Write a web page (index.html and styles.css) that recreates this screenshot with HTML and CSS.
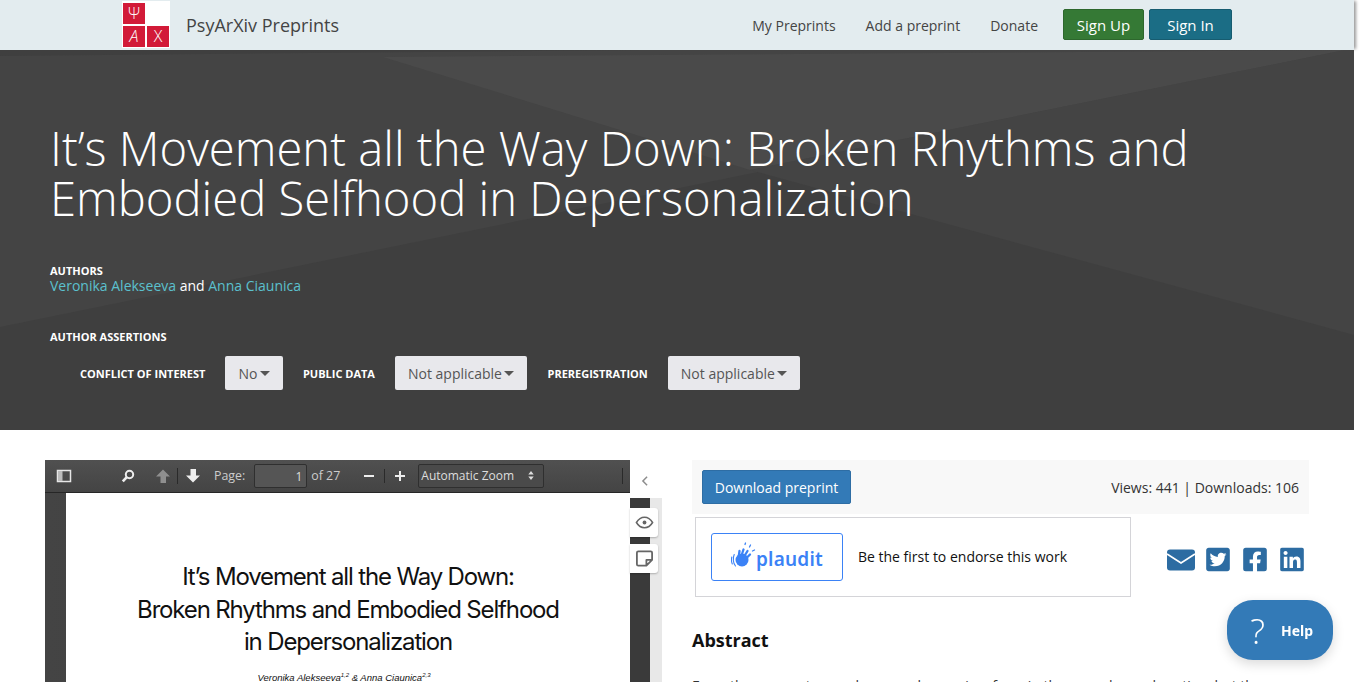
FILE: index.html
```html
<!DOCTYPE html>
<html lang="en">
<head>
<meta charset="utf-8">
<title>PsyArXiv Preprints</title>
<link rel="stylesheet" href="styles.css">
</head>
<body>
<div class="page">
  <header class="nav">
    <a class="logo" href="#">
      <span class="cell">Ψ</span><span class="cell blank"></span>
      <span class="cell ital">A</span><span class="cell">Χ</span>
    </a>
    <a class="brand" href="#">PsyArXiv Preprints</a>
    <nav class="links">
      <a href="#">My Preprints</a>
      <a href="#">Add a preprint</a>
      <a href="#">Donate</a>
    </nav>
    <div class="auth">
      <a class="btn up" href="#">Sign Up</a>
      <a class="btn in" href="#">Sign In</a>
    </div>
  </header>

  <section class="hero">
    <svg class="hero-bg" viewBox="0 0 1354 380" preserveAspectRatio="none" aria-hidden="true">
      <polygon points="0,0 1354,0 0,277" fill="#444444"/>
      <polygon points="383,7 1345,0 750,120" fill="#4a4a4a"/>
      <polygon points="1345,0 1354,0 1354,285 750,120" fill="#444444"/>
      <polygon points="0,0 640,0 0,6" fill="#3f3f3f"/>
    </svg>
    <div class="hero-inner">
      <h1>It’s Movement all the Way Down: Broken Rhythms and Embodied Selfhood in Depersonalization</h1>
      <div class="authors">
        <h5>AUTHORS</h5>
        <p><a href="#">Veronika Alekseeva</a> and <a href="#">Anna Ciaunica</a></p>
      </div>
      <h5 class="assert-title">AUTHOR ASSERTIONS</h5>
      <div class="assertions">
        <span class="label">CONFLICT OF INTEREST</span>
        <button class="drop">No<i></i></button>
        <span class="label">PUBLIC DATA</span>
        <button class="drop">Not applicable<i></i></button>
        <span class="label">PREREGISTRATION</span>
        <button class="drop">Not applicable<i></i></button>
      </div>
    </div>
  </section>

  <main class="content">
    <div class="viewer-wrap">
      <div class="viewer">
        <div class="toolbar">
          <svg class="tb sidebar" viewBox="0 0 16 16"><rect x="1.5" y="2.500" width="13" height="11" fill="none" stroke="#e6e6e6" stroke-width="1.500"/><rect x="2" y="3" width="4.500" height="10" fill="#bbb"/></svg>
          <svg class="tb search" viewBox="0 0 16 16"><circle cx="9.500" cy="6.500" r="3.700" fill="none" stroke="#eee" stroke-width="2"/><path d="M6.800 9.200 2.800 13.400" stroke="#eee" stroke-width="2.600"/></svg>
          <svg class="tb up-arrow" viewBox="0 0 16 16"><path d="M8 1.500 15 8.500H11V15H5.500V8.500H1Z" fill="#8f8f8f"/></svg>
          <span class="sep"></span>
          <svg class="tb down-arrow" viewBox="0 0 16 16"><path d="M8 14.500 15 7.500H11V1H5.500V7.500H1Z" fill="#eee"/></svg>
          <span class="tb-text page-label">Page:</span>
          <span class="page-input">1</span>
          <span class="tb-text of">of 27</span>
          <svg class="tb minus" viewBox="0 0 12 12"><path d="M1 6H11" stroke="#eee" stroke-width="2"/></svg>
          <span class="sep short"></span>
          <svg class="tb plus" viewBox="0 0 12 12"><path d="M1 6H11M6 1V11" stroke="#eee" stroke-width="2"/></svg>
          <span class="zoom-select">Automatic Zoom<svg viewBox="0 0 6 10"><path d="M3 0 6 4H0ZM3 10 0 6H6Z" fill="#ddd"/></svg></span>
          <span class="sep end"></span>
        </div>
        <div class="doc">
          <div class="sheet">
            <h2>It’s Movement all the Way Down:<br>Broken Rhythms and Embodied Selfhood<br>in Depersonalization</h2>
            <p class="byline">Veronika Alekseeva<sup>1,2</sup> &amp; Anna Ciaunica<sup>2,3</sup></p>
          </div>
        </div>
      </div>
      <div class="rail">
        <div class="chev"><svg viewBox="0 0 8 12"><path d="M6.500 1 1.500 6 6.500 11" fill="none" stroke="#8d8d8d" stroke-width="1.800"/></svg></div>
        <div class="rail-body">
          <button class="tool"><svg viewBox="0 0 20 20"><path d="M1.500 10C4 5.800 7 4.500 10 4.500S16 5.800 18.500 10C16 14.200 13 15.500 10 15.500S4 14.200 1.500 10Z" fill="none" stroke="#666" stroke-width="1.600"/><circle cx="10" cy="10" r="2" fill="#666"/></svg></button>
          <button class="tool"><svg viewBox="0 0 20 20"><path d="M18 11.500V4a1.500 1.500 0 0 0-1.500-1.500H3.500A1.500 1.500 0 0 0 2 4V16a1.500 1.500 0 0 0 1.500 1.500H12ZM12 17.500V11.500H18" fill="none" stroke="#666" stroke-width="1.900" stroke-linejoin="round"/></svg></button>
        </div>
      </div>
    </div>

    <aside class="side">
      <div class="dl-bar">
        <a class="download" href="#">Download preprint</a>
        <span class="stats">Views: 441 | Downloads: 106</span>
      </div>
      <div class="endorse-row">
        <div class="plaudit">
          <a class="plaudit-btn" href="#">
            <svg viewBox="0 0 25 26" aria-hidden="true">
              <circle cx="11" cy="18" r="6.500" fill="#3b82f6"/>
              <g fill="none" stroke="#3b82f6" stroke-linecap="round">
                <path stroke-width="2.300" d="M7.500 16 8.500 9M10 15 12.500 7.500M12.500 15.500 16.500 9M14.500 17 19 12.500"/>
                <path stroke-width="1.100" d="M3.200 12.500C1.700 16 2 21 4.500 24"/>
                <path stroke-width="1.100" d="M.8 15C.3 17 .4 20 1.300 22"/>
                <path stroke-width="1.300" d="M14.500 1 14 2.500M19.500 3 18.500 5M23.500 8 21.500 9"/>
              </g>
            </svg>
            <span>plaudit</span>
          </a>
          <span class="endorse">Be the first to endorse this work</span>
        </div>
        <div class="share">
          <svg class="mail" viewBox="0 0 28 22"><rect width="28" height="21" y=".5" rx="3" fill="#2d6ca2"/><path d="M0 5 14 14 28 5" fill="none" stroke="#fff" stroke-width="1.700"/></svg>
          <svg viewBox="0 0 448 512"><path fill="#2d6ca2" d="M400 32H48C21.500 32 0 53.500 0 80v352c0 26.500 21.500 48 48 48h352c26.500 0 48-21.500 48-48V80c0-26.500-21.500-48-48-48zm-48.900 158.800c.2 2.800.2 5.700.2 8.500 0 86.700-66 186.600-186.600 186.600-37.200 0-71.700-10.800-100.700-29.400 5.300.6 10.400.8 15.800.8 30.700 0 58.900-10.400 81.400-28-28.800-.6-53-19.500-61.300-45.500 10.100 1.500 19.200 1.500 29.600-1.200-30-6.100-52.500-32.500-52.500-64.400v-.8c8.700 4.900 18.900 7.900 29.600 8.300a65.447 65.447 0 0 1-29.200-54.600c0-12.200 3.200-23.400 8.900-33.100 32.300 39.800 80.800 65.800 135.200 68.600-9.300-44.500 24-80.600 64-80.600 18.900 0 35.900 7.900 47.900 20.700 14.800-2.800 29-8.300 41.600-15.800-4.900 15.200-15.100 28-28.600 36 13.100-1.400 25.800-5 37.600-10.100-8.900 13.100-20.100 24.700-32.900 34z"/></svg>
          <svg viewBox="0 0 448 512"><path fill="#2d6ca2" d="M400 32H48A48 48 0 0 0 0 80v352a48 48 0 0 0 48 48h137.250V327.690h-63V256h63v-54.640c0-62.150 37-96.480 93.670-96.480 27.140 0 55.520 4.840 55.520 4.840v61h-31.270c-30.810 0-40.420 19.120-40.420 38.730V256h68.780l-11 71.690h-57.780V480H400a48 48 0 0 0 48-48V80a48 48 0 0 0-48-48z"/></svg>
          <svg viewBox="0 0 448 512"><path fill="#2d6ca2" d="M416 32H31.900C14.300 32 0 46.500 0 64.300v383.400C0 465.500 14.300 480 31.900 480H416c17.600 0 32-14.500 32-32.300V64.300c0-17.800-14.400-32.300-32-32.300zM135.400 416H69V202.200h66.500V416zm-33.200-243c-21.300 0-38.500-17.300-38.500-38.500S80.900 96 102.200 96c21.200 0 38.500 17.300 38.500 38.500 0 21.300-17.200 38.500-38.500 38.500zm282.100 243h-66.400V312c0-24.800-.5-56.700-34.500-56.700-34.600 0-39.900 27-39.900 54.900V416h-66.400V202.200h63.700v29.200h.9c8.900-16.800 30.600-34.500 62.900-34.500 67.200 0 79.700 44.300 79.700 101.900V416z"/></svg>
        </div>
      </div>
      <h3>Abstract</h3>
      <p class="abstract">From the moment we wake up each morning, from in the everyday and routine, but the</p>
    </aside>
  </main>
</div>
<button class="help"><span class="q">?</span><span>Help</span></button>
</body>
</html>
```
FILE: styles.css
```css
* { box-sizing: border-box; }
html, body { margin: 0; padding: 0; height: 682px; overflow: hidden; background: #fff; }
body { font-family: "Open Sans", "Liberation Sans", sans-serif; font-size: 14px; color: #333; }
a { text-decoration: none; color: inherit; }
h1, h2, h3, h5, p { margin: 0; }
.page { width: 1354px; height: 682px; }

.nav { height: 50px; background: #e3ecef; display: flex; align-items: center; padding: 0 122px; box-shadow: 3px 0 3px -1px rgba(0,0,0,.4); }
.logo { width: 48px; height: 47px; background: #fff; display: grid; grid-template-columns: 22px 22px; grid-auto-rows: 21px; gap: 2px; padding: 2px 1px 0; margin-top: -1px; }
.cell { background: #d21a38; color: #fff; font-size: 16px; font-weight: 300; line-height: 21px; text-align: center; font-family: "Open Sans", "DejaVu Sans", sans-serif; }
.cell.blank { background: #fff; }
.cell.ital { font-style: italic; }
.brand { margin-left: 16px; font-size: 18px; color: #444; line-height: 50px; }
.links { margin-left: auto; display: flex; gap: 30px; font-size: 14px; color: #444; }
.auth { display: flex; gap: 5px; margin-left: 25px; margin-top: -1px; }
.btn { height: 31px; border-radius: 2px; color: #fff; font-size: 15px; text-align: center; border: 1px solid; line-height: 31px; }
.btn.up { width: 81px; background: #357935; border-color: #2d672d; }
.btn.in { width: 83px; background: #1b6d85; border-color: #175c70; }

.hero { position: relative; height: 380px; background: #3f3f3f; color: #fff; }
.hero-bg { position: absolute; inset: 0; width: 100%; height: 100%; }
.hero-inner { position: relative; padding: 73px 50px 0; }
h1 { font-size: 47.2px; font-weight: 300; line-height: 50px; color: #fff; max-width: 1180px; }
h5 { font-size: 11px; line-height: 14px; font-weight: 700; color: #fff; }
.authors { margin-top: 41px; }
.authors p { font-size: 14px; line-height: 16px; }
.authors a { color: #5bc0ce; }
.assert-title { margin-top: 36px; }
.assertions { display: flex; align-items: center; padding-left: 30px; margin-top: 12px; }
.label { font-size: 11px; font-weight: 700; color: #fff; line-height: 32px; padding-top: 2px; margin-right: 20px; }
.drop { height: 34px; padding: 2px 13px 0; border: 0; border-radius: 2px; background: #e8e8ec; color: #555; font: 14px/32px "Open Sans", sans-serif; margin-right: 20px; display: flex; align-items: center; }
.drop i { width: 0; height: 0; margin-left: 2.500px; margin-top: -2px; border: 5px solid transparent; border-top-color: #555; border-bottom: 0; }

.content { display: flex; padding: 30px 45px 0 45px; align-items: flex-start; }
.viewer-wrap { display: flex; width: 617px; height: 222px; overflow: hidden; }
.viewer { width: 585px; background: #3c3c3c; flex: none; }
.toolbar { height: 33px; background: #474747 linear-gradient(#505050, #444); border-bottom: 1px solid #262626; display: flex; align-items: center; color: #ddd; }
.tb { display: block; flex: none; }
.sidebar { width: 16px; height: 16px; margin-left: 11px; }
.search { width: 16px; height: 16px; margin-left: 48px; }
.up-arrow { width: 16px; height: 16px; margin-left: 19px; }
.sep { width: 1px; height: 16px; background: #2a2a2a; margin: 0 7px 0 6px; flex: none; }
.down-arrow { width: 16px; height: 16px; }
.tb-text { font-size: 12.400px; color: #ccc; padding-bottom: 2px; }
.page-label { margin-left: 13px; }
.page-input { width: 53px; height: 24px; margin-left: 9px; border: 1px solid #2f2f2f; border-radius: 2px; background: #555; text-align: right; padding-right: 4px; line-height: 24px; font-size: 12px; color: #ddd; }
.of { margin-left: 4px; }
.minus { width: 12px; height: 12px; margin-left: 23px; }
.sep.short { height: 14px; margin: 0 9px 0 9px; background: #2a2a2a; }
.plus { width: 12px; height: 12px; }
.zoom-select { margin-left: 12px; width: 126px; height: 24px; background: #4a4a4a; border: 1px solid #2f2f2f; border-radius: 2px; font-size: 12px; color: #ddd; padding: 0 9px 2px 2px; display: flex; align-items: center; justify-content: space-between; }
.zoom-select svg { width: 6px; height: 9px; }
.sep.end { margin-left: auto; margin-right: 7px; }
.doc { display: flex; height: 189px; padding-left: 21px; background: linear-gradient(90deg,#444 0,#3a3a3a 100%); }
.sheet { flex: 1; background: #fff; text-align: center; color: #111; padding-top: 68px; }
.sheet h2 { font-family: Inter, "Liberation Sans", sans-serif; font-weight: 400; font-size: 24px; line-height: 32.500px; letter-spacing: -1.150px; color: #111; }
.byline { font-family: "Liberation Sans", sans-serif; font-style: italic; font-size: 9.500px; line-height: 12px; margin-top: 13px; color: #111; padding-right: 8px; }
.byline sup { font-size: 6px; line-height: 0; }

.rail { width: 32px; flex: none; }
.chev { height: 38px; width: 32px; background: #fff; padding: 16px 0 0 11px; }
.chev svg { width: 8px; height: 10px; display: block; }
.rail-body { height: 184px; background: linear-gradient(90deg,#3a3a3a 0,#3a3a3a 20px,#e8e8e8 20px,#e8e8e8 32px); padding-top: 10px; display: flex; flex-direction: column; gap: 7px; }
.tool { width: 28px; height: 29px; padding: 0; border: 0; border-radius: 0 3px 3px 0; background: #fff; box-shadow: 0 1px 2px rgba(0,0,0,.25); display: flex; align-items: center; justify-content: center; }
.tool svg { width: 19px; height: 19px; }

.side { width: 617px; margin-left: 30px; flex: none; }
.dl-bar { height: 54px; background: #f8f8f8; display: flex; align-items: center; justify-content: space-between; padding: 0 10px; }
.download { height: 34px; width: 149px; background: #337ab7; border: 1px solid #2e6da4; border-radius: 2px; color: #fff; text-align: center; line-height: 33px; font-size: 14px; }
.stats { font-size: 14px; color: #333; }
.endorse-row { display: flex; align-items: center; margin-top: 3px; padding-left: 3px; }
.plaudit { width: 436px; height: 80px; border: 1px solid #d4d4d8; display: flex; align-items: center; padding-left: 15px; }
.plaudit-btn { width: 132px; height: 48px; border: 1px solid #3b82f6; border-radius: 3px; display: flex; align-items: center; padding-left: 19px; color: #3b82f6; font-weight: 600; font-size: 19px; font-family: "Noto Sans", "Open Sans", sans-serif; }
.plaudit-btn svg { width: 25px; height: 26px; margin-top: -4px; flex: none; }
.plaudit-btn span { margin-top: 3px; letter-spacing: .2px; }
.endorse { margin-left: 15px; margin-top: -2px; font-size: 14px; color: #111; }
.share { display: flex; align-items: center; margin-left: 36px; margin-top: 5px; gap: 13px; }
.share svg { width: 24px; height: 27px; display: block; }
.share .mail { width: 28px; height: 22px; margin-right: -2px; }
h3 { font-size: 18px; font-weight: 700; color: #111; margin-top: 31px; line-height: 24px; }
.abstract { font-size: 14px; line-height: 20px; margin-top: 24px; color: #333; white-space: nowrap; }

.help { position: fixed; left: 1227px; top: 600px; width: 106px; height: 60px; border: 0; border-radius: 26px; background: #337ab7; color: #fff; box-shadow: 0 4px 12px rgba(0,0,0,.15); display: flex; align-items: center; padding: 0 0 0 20px; font: 700 14px "Noto Sans", "Open Sans", sans-serif; }
.q { font-size: 35px; font-weight: 300; font-family: "Open Sans", sans-serif; margin-right: 13px; line-height: 1; width: 21px; text-align: center; }
```
